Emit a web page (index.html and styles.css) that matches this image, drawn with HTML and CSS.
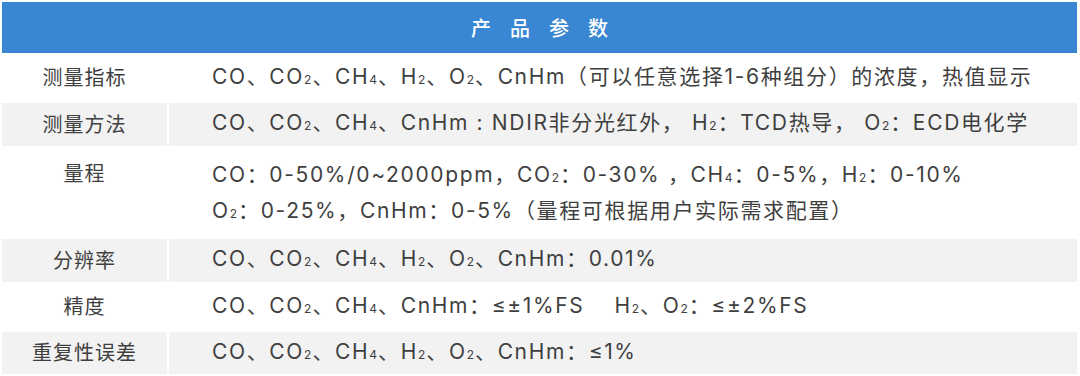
FILE: index.html
```html
<!DOCTYPE html>
<html lang="zh">
<head>
    <meta charset="UTF-8">
    <title>产品参数</title>
    <link rel="stylesheet" href="styles.css">
</head>
<body>
    <!-- Product parameter table -->
    <table class="params">
        <tr>
            <th colspan="2" class="title">产品参数</th>
        </tr>
        <tr class="r46">
            <td class="label">测量指标</td>
            <td class="value">CO、CO<span class="sub">2</span>、CH<span class="sub">4</span>、H<span class="sub">2</span>、O<span class="sub">2</span>、CnHm（可以任意选择1-6种组分）的浓度，热值显示</td>
        </tr>
        <tr class="shade r43">
            <td class="label">测量方法</td>
            <td class="value">CO、CO<span class="sub">2</span>、CH<span class="sub">4</span>、CnHm : NDIR非分光红外， H<span class="sub">2</span>：TCD热导， O<span class="sub">2</span>：ECD电化学</td>
        </tr>
        <tr class="tall">
            <td class="label">量程</td>
            <td class="value">CO：0-50%/0~2000ppm，CO<span class="sub">2</span>：0-30% ，CH<span class="sub">4</span>：0-5%，H<span class="sub">2</span>：0-10%<br>O<span class="sub">2</span>：0-25%，CnHm：0-5%（量程可根据用户实际需求配置）</td>
        </tr>
        <tr class="shade r43">
            <td class="label">分辨率</td>
            <td class="value">CO、CO<span class="sub">2</span>、CH<span class="sub">4</span>、H<span class="sub">2</span>、O<span class="sub">2</span>、CnHm：0.01%</td>
        </tr>
        <tr class="r46">
            <td class="label">精度</td>
            <td class="value">CO、CO<span class="sub">2</span>、CH<span class="sub">4</span>、CnHm：≤±1%FS<span class="gap"></span>H<span class="sub">2</span>、O<span class="sub">2</span>：≤±2%FS</td>
        </tr>
        <tr class="shade r42">
            <td class="label">重复性误差</td>
            <td class="value">CO、CO<span class="sub">2</span>、CH<span class="sub">4</span>、H<span class="sub">2</span>、O<span class="sub">2</span>、CnHm：≤1%</td>
        </tr>
    </table>
</body>
</html>
```

FILE: styles.css
```css
/* Page */
body {
    margin: 0;
    background: #fff;
    font-family: "Inter", "Noto Sans CJK SC", sans-serif;
    color: #3f3f3f;
}

/* Table */
.params {
    width: 1079px;
    border-spacing: 2px;
    font-size: 21px;
    letter-spacing: 1.65px;
}

.params td {
    padding: 0;
    line-height: 30px;
    vertical-align: middle;
}

/* Header */
.title {
    height: 51px;
    padding: 0;
    background: #3987d3;
    color: #fff;
    font-family: "Noto Sans CJK SC", sans-serif;
    font-size: 20px;
    font-weight: 500;
    letter-spacing: 19px;
    text-indent: 19px;
    text-align: center;
}

/* Cells */
.label {
    width: 165px;
    text-align: center;
    font-size: 20px;
    letter-spacing: 1px;
}

.params .value {
    padding-left: 43px;
    text-align: left;
}

.r46 td { height: 46px; }
.r43 td { height: 43px; }
.r42 td { height: 42px; }

.shade td {
    background: #f2f2f2;
}

.params .tall td {
    height: 89px;
    padding-top: 10px;
    line-height: 33px;
    vertical-align: top;
    box-sizing: border-box;
}

.sub {
    font-size: 12px;
    letter-spacing: 0;
    margin-right: 1px;
}

.gap {
    display: inline-block;
    width: 30px;
}
```
